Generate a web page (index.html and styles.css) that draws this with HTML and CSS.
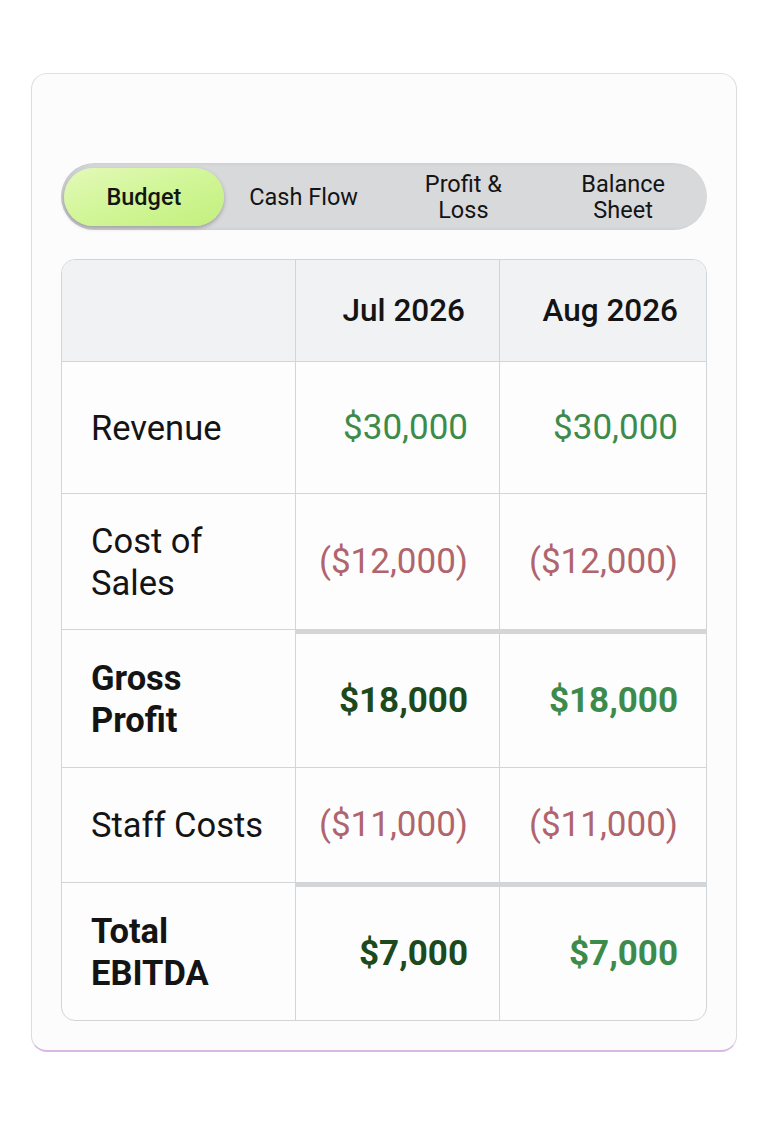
FILE: index.html
```html
<!DOCTYPE html>
<html lang="en">
<head>
    <meta charset="UTF-8">
    <meta name="viewport" content="width=device-width, initial-scale=1.0">
    <title>Budget</title>

    <link rel="stylesheet" href="styles.css">
</head>
<body>
    <div class="card">
        <div class="tabs">
            <button class="tab active" type="button">Budget</button>
            <button class="tab" type="button">Cash Flow</button>
            <button class="tab" type="button">Profit &amp;<br>Loss</button>
            <button class="tab" type="button">Balance<br>Sheet</button>
        </div>

        <div class="report">
            <div class="cell head"></div>
            <div class="cell head num">Jul 2026</div>
            <div class="cell head num">Aug 2026</div>

            <div class="cell label">Revenue</div>
            <div class="cell num pos">$30,000</div>
            <div class="cell num pos">$30,000</div>

            <div class="cell label">Cost of<br>Sales</div>
            <div class="cell num neg">($12,000)</div>
            <div class="cell num neg">($12,000)</div>

            <div class="cell label total">Gross<br>Profit</div>
            <div class="cell num total sep dark">$18,000</div>
            <div class="cell num total sep pos">$18,000</div>

            <div class="cell label">Staff Costs</div>
            <div class="cell num neg">($11,000)</div>
            <div class="cell num neg">($11,000)</div>

            <div class="cell label total">Total<br>EBITDA</div>
            <div class="cell num total sep dark">$7,000</div>
            <div class="cell num total sep pos">$7,000</div>
        </div>
    </div>
</body>
</html>
```

FILE: styles.css
```css
body{
    margin: 0;
    background-color: #ffffff;
    font-family: Roboto, "Liberation Sans", sans-serif;
    color: #141414;
}

.card{
    width: 706px;
    height: 979px;
    box-sizing: border-box;
    margin: 73px 0 0 31px;
    padding: 89px 29px 0 29px;
    background-color: #fcfcfc;
    border: 1.5px solid #dcdcdf;
    border-top-color: #ecd8ec;
    border-bottom: 2px solid #d9b9e4;
    border-radius: 16px;
}

.tabs{
    display: grid;
    grid-template-columns: repeat(4, 1fr);
    height: 67px;
    box-sizing: border-box;
    padding: 5px 4px 4px 3px;
    background-color: #d8d9db;
    border-radius: 34px;
    box-shadow: inset 3px 0 4px rgba(0, 0, 0, .08);
}

.tab{
    border: 0;
    background: none;
    font-family: inherit;
    font-size: 23.5px;
    line-height: 26px;
    color: #141414;
    cursor: pointer;
    border-radius: 29px;
}

.tab.active{
    font-weight: 500;
    background: linear-gradient(160deg, #e4f9b9 0%, #d2f69a 45%, #c3f07d 100%);
    box-shadow: 0 2px 4px rgba(0, 0, 0, .28);
}

.report{
    display: grid;
    grid-template-columns: 234px 204px 1fr;
    grid-template-rows: 102px 132px 136px 138px 115px 137px;
    margin-top: 29px;
    border: 1.5px solid #d2d5d8;
    border-radius: 14px;
    overflow: hidden;
    background-color: #fdfdfd;
}

.cell{
    display: flex;
    align-items: center;
    box-sizing: border-box;
    border-right: 1.5px solid #d2d5d8;
    border-bottom: 1.5px solid #d2d5d8;
    font-size: 34.5px;
    line-height: 42px;
}

.cell:nth-child(3n){
    border-right: 0;
}

.cell:nth-last-child(-n+3){
    border-bottom: 0;
}

.head{
    background-color: #f0f2f4;
    font-size: 31.5px;
    font-weight: 500;
}

.label{
    padding-left: 29px;
}

.num{
    justify-content: flex-end;
    padding-right: 31px;
    font-size: 35px;
}

.cell:nth-child(3n).num{
    padding-right: 28px;
}

.head.num{
    font-size: 31.5px;
    padding-right: 34px;
}

.cell:nth-child(3n).head{
    padding-right: 28px;
}

.total{
    font-weight: 700;
}

.sep{
    border-top: 4px solid #d3d5d7;
}

.pos{
    color: #3d8b4c;
}

.neg{
    color: #b0646d;
}

.dark{
    color: #1c4a1c;
}
```
